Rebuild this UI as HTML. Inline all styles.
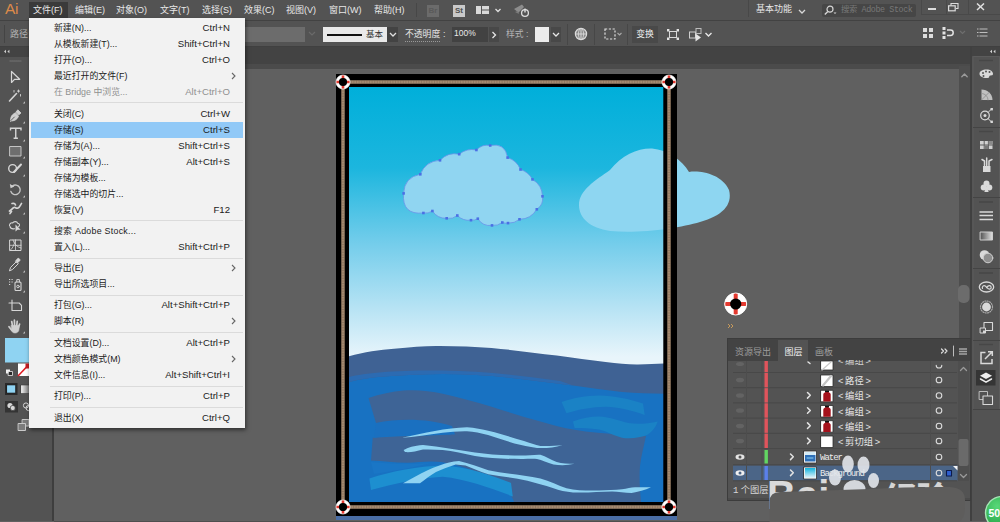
<!DOCTYPE html>
<html lang="zh-CN">
<head>
<meta charset="utf-8">
<title>Adobe Illustrator</title>
<style>
*{margin:0;padding:0;box-sizing:border-box}
html,body{width:1000px;height:522px;overflow:hidden;background:#606060}
body{position:relative;font-family:"Liberation Sans","Noto Sans CJK SC",sans-serif;font-size:9.5px;color:#e6e6e6;line-height:1}
.abs{position:absolute}
#menubar{left:0;top:0;width:1000px;height:20px;background:#535353}
#menubar .mi{position:absolute;top:0;height:20px;line-height:20px;font-size:9px;color:#e8e8e8;white-space:nowrap}
#ctrl{left:0;top:20px;width:1000px;height:27px;background:#535353;border-top:1px solid #424242;border-bottom:1px solid #404040}
#tabstrip{left:0;top:47px;width:972px;height:22px;background:#434343;border-bottom:5px solid #4b4b4b}
#toolbar{left:0;top:47px;width:54px;height:474px;background:#535353;border-right:2px solid #3e3e3e}
#toolhead{left:0;top:47px;width:52px;height:9.500px;background:#434343}
#rpanel{left:970px;top:47px;width:30px;height:474px;background:#535353;border-left:2px solid #404040}
#rhead{left:972px;top:47px;width:28px;height:9px;background:#434343}
#vscroll{left:959px;top:66px;width:11px;height:274px;background:#4e4e4e}
#menu{left:29px;top:18px;width:216px;height:410px;background:#f2f2f2;box-shadow:1px 2px 4px rgba(0,0,0,.5);color:#1b1b1b;font-size:8.9px}
#menu .r{position:absolute;left:2px;width:212px;height:16px;line-height:16px;white-space:nowrap}
#menu .r .l{position:absolute;left:23px;top:0}
#menu .r .s{position:absolute;right:13px;top:0;font-size:9.6px}
#menu .r .a{position:absolute;right:7px;top:4px}
#menu .r.dis{color:#909090}
#menu .r.hl{background:#91c9f7}
#menu .sep{position:absolute;left:21px;width:193px;height:1px;background:#dbdbdb}
.lt{font-size:9.3px;line-height:12px;color:#e6e6e6;white-space:nowrap;word-spacing:-.9px}
.mono{font-family:"Liberation Mono","Noto Sans CJK SC",monospace;font-size:9px;letter-spacing:-1px;color:#ececec}
</style>
</head>
<body>
<!-- ART -->
<svg class="abs" style="left:0;top:0" width="1000" height="522" viewBox="0 0 1000 522">
<defs>
<linearGradient id="sky" gradientUnits="userSpaceOnUse" x1="0" y1="87" x2="0" y2="357">
<stop offset="0" stop-color="#00afda"/><stop offset=".3" stop-color="#1cb6de"/><stop offset=".58" stop-color="#74cdeb"/><stop offset=".82" stop-color="#b7e3f4"/><stop offset="1" stop-color="#e8f5fb"/>
</linearGradient>
<g id="buoy"><circle r="7" fill="#fff"/><path d="M-1.300,-7h2.600v14h-2.600zM-7,-1.300h14v2.600h-14z" fill="#e43a30"/><circle r="7" fill="none" stroke="#fff" stroke-width=".7"/><circle r="4.100" fill="#000"/></g>
</defs>
<rect x="0" y="66" width="1000" height="456" fill="#606060"/>
<!-- blue bleed under frame -->
<rect x="336" y="514" width="341" height="6" fill="#4a6ea6"/>
<rect x="54" y="521" width="903" height="1" fill="#4e4e4e"/>
<!-- sky -->
<rect x="349" y="87" width="315" height="290" fill="url(#sky)"/>
<!-- cloud 2 (behind frame) -->
<path d="M579,205 C579,190 596,180 610,170 C622,155 638,148 652,148.500 C668,150 682,160 689,172 C700,170 722,174 729,190 C733,205 722,216 700,222 C680,228 640,234 610,231 C590,228 579,218 579,205Z" fill="#8ed6f1"/>
<!-- sea -->
<path d="M349,356.300C364,352 380,350 394,348.800C410,347 424,346 436,345.900C456,345.800 474,346.500 491.600,348C514,350 536,353 556.700,355.600C574,358 590,360.500 605.600,362C618,363.500 628,364.500 638,364.400C648,364.300 656,364 664,363.500V502H349Z" fill="#3f6294"/>
<path d="M349,382C360,379 372,377.500 384,376.500C404,375 424,374 442.700,374C466,374 488,375.500 508,377.500C530,380 552,383 573,385.600C590,388 606,390.500 622,392C636,393.300 650,393.700 664,393.700V502H349Z" fill="#1872c2"/>
<path d="M349,377C366,372.500 400,370 442,370.500C480,371 520,375 560,381L573,385.600C552,383 530,380 508,377.500C488,375.500 466,374 442.700,374C424,374 404,375 384,376.500C372,377.500 360,379 349,382Z" fill="#2c6bb2"/>
<!-- big slate band A + right/bottom slate -->
<path d="M368.500,398C380,394 392,391.500 403.600,390.500C417,389.500 430,391 442.700,393.700C460,397.500 476,402 491.600,406.800C508,412 524,417 540.400,421.400C551,424.500 562,427.500 573,429.600C590,432.500 606,433.800 622,434.500C632,435 640,435.500 646,436C644,446 641,456 640,466C639,478 640,490 641,502H514C512,494 505,487 497,482C480,472 465,467 452,464C440,461 430,461 420,462C402,464 386,461 371,460.500L372.700,437.700C398,436 420,436 452,434.500C430,428 404,421 376,423Z" fill="#3e6496"/>
<path d="M376,423C400,418 428,418.500 452,426L455,434.500C426,434 398,434.500 374,437.700Z" fill="#1a70c0"/>
<!-- teal strokes -->
<path d="M561.600,402C574,397.500 586,395.600 599,395.400C614,395.600 630,399 643,403.500L644.700,415C632,410.500 618,407.200 605.600,406.800C592,407 578,409.500 566.500,413.300Z" fill="#1a82c5"/>
<path d="M573,421.400C582,418 590,416.600 599,416.500C610,417 620,421 628.400,423C638,424.500 648,423.500 657.700,421.400C656,427 652,431.500 648,434.500C640,438 630,439 622,437.700C614,436 606,431 599,429.600C590,428 582,428 574.600,428Z" fill="#1a82c5"/>
<path d="M369.400,478.400C392,471 418,466 442.700,465.400C468,467 492,475 511,483L512.800,496.400C490,488 466,479 442.700,476.800C418,478 394,484 371,490Z" fill="#1d8fd0"/>
<path d="M371,462C392,464 410,464.500 430,463C420,466 400,470 374,474Z" fill="#1a76c6"/>
<!-- streaks -->
<path d="M402,437.700C424,433 446,428 467,427.300C488,429 506,436 524,441C530,443 535,445 540.400,445.900C548,446.500 556,445.500 562.600,444.900C554,447.500 546,448.500 537,448C529,447 522,445.500 514.400,443.600C498,438 482,432 467,431.200C458,431 450,432 442.700,432.800C428,435 414,437 402,437.700Z" fill="#8fd3f2"/>
<path d="M403.600,450C408,447.500 414,445.500 423,444.900C440,446.500 458,450 475,452.400C490,454.500 506,455.500 521,455.600C528,455.500 534,454.500 540.400,454.700C546,456.500 551,460 556.700,462C562,463.500 568,463.800 574.600,463.800C567,465.500 560,465.500 553.500,464.400C547,463 542,460 537,459C532,458.500 526,459.200 521,459C505,459 490,458.500 475,456C464,453.500 453,451 442.700,450C436,449.500 429,449.300 423,449.500C416,451.500 410,452.500 405,452Z" fill="#8fd3f2"/>
<path d="M403,483.300C407,481 411,479 415,476.800C423,472 431,468 439.500,465.400C446,463 452,461.500 459,461C469,463.500 479,467 488.300,470.300C506,474 524,475 540.400,478.400C550,481 558,485.500 566.500,488.200C577,490.500 588,490.800 599,490.500C607,490.300 615,490 622,489.200C627,488.500 631,487.500 635,487.200L651,487.200C645,490 638,492 631.600,493C625,492.800 618,491.600 612,491.500C599,491.800 586,493 573,492.400C566,491.500 559,490.500 553.500,488.200C544,485 536,483 527.400,480.700C514,477.500 501,476.500 488.300,474.200C480,472 473,468 465.500,465.400L455.700,464.400C449,466.500 442,469 436,472C430,475.500 425,479.500 420,483.300Z" fill="#8fd3f2"/>
<!-- cloud 1 -->
<path id="c1" d="M403.6,193.4Q404.3,177.2 420.3,174.3Q425.7,161.0 440.0,160.3Q447.9,151.9 459.2,154.2Q466.8,148.0 476.4,150.0Q482.0,143.9 490.2,145.5Q505.2,142.5 507.6,157.6Q516.9,160.5 520.5,169.5Q528.5,172.0 532.5,179.4Q542.2,185.1 542.5,196.3Q543.8,204.6 536.8,209.3Q530.9,219.1 519.5,219.3Q514.5,223.5 508.0,223.1Q505.1,223.5 502.3,222.5Q497.7,226.0 492.0,225.4Q482.8,226.6 477.8,218.7Q474.6,220.5 471.0,220.2Q463.0,221.1 457.3,215.5Q452.7,219.4 446.7,218.3Q437.5,218.7 432.4,211.0Q428.3,213.8 423.4,213.0Q401.7,215.1 403.6,193.4Z" fill="#90d5f1" stroke="#6a93ea" stroke-width=".8"/>
<g fill="#4a70e4"><rect x="402.3" y="192.1" width="2.6" height="2.6"/><rect x="419.0" y="173.0" width="2.6" height="2.6"/><rect x="438.7" y="159.0" width="2.6" height="2.6"/><rect x="457.9" y="152.9" width="2.6" height="2.6"/><rect x="475.1" y="148.7" width="2.6" height="2.6"/><rect x="488.9" y="144.2" width="2.6" height="2.6"/><rect x="506.3" y="156.3" width="2.6" height="2.6"/><rect x="519.2" y="168.2" width="2.6" height="2.6"/><rect x="531.2" y="178.1" width="2.6" height="2.6"/><rect x="541.2" y="195.0" width="2.6" height="2.6"/><rect x="535.5" y="208.0" width="2.6" height="2.6"/><rect x="518.2" y="218.0" width="2.6" height="2.6"/><rect x="506.7" y="221.8" width="2.6" height="2.6"/><rect x="501.0" y="221.2" width="2.6" height="2.6"/><rect x="490.7" y="224.1" width="2.6" height="2.6"/><rect x="476.5" y="217.4" width="2.6" height="2.6"/><rect x="469.7" y="218.9" width="2.6" height="2.6"/><rect x="456.0" y="214.2" width="2.6" height="2.6"/><rect x="445.4" y="217.0" width="2.6" height="2.6"/><rect x="431.1" y="209.7" width="2.6" height="2.6"/><rect x="422.1" y="211.7" width="2.6" height="2.6"/></g>
<!-- frame -->
<path d="M336,74H677V516H336Z M349,87V502H663.300V87Z" fill="#000" fill-rule="evenodd"/>
<path d="M343,82H669V507H343Z" fill="none" stroke="#a58a70" stroke-width="3.4"/>
<path d="M343,82H669V507H343Z" fill="none" stroke="#6e5a48" stroke-width="3.4" stroke-dasharray="1 1.6" opacity=".35"/>
<use href="#buoy" x="343" y="82"/><use href="#buoy" x="669" y="82"/><use href="#buoy" x="343" y="507"/><use href="#buoy" x="669" y="507"/>
<!-- cloud 2 outside -->
<path d="M677,150 V233 C700,228 722,216 729,205 C733,195 722,172 700,167 C690,166 684,160 677,150Z" fill="#8ed6f1" opacity="0"/>
<g transform="translate(735.700,304)"><circle r="11" fill="#fff"/><path d="M-2,-11h4v22h-4zM-11,-2h22v4h-22z" fill="#e43a30"/><circle r="11" fill="none" stroke="#fff" stroke-width="1"/><circle r="5.600" fill="#000"/></g>
<path d="M728,324l2,2l-2,2m3,-4l2,2l-2,2" stroke="#c79a5b" stroke-width="1" fill="none"/>
</svg>

<div id="tabstrip" class="abs"></div>
<div id="vscroll" class="abs"></div>
<div id="menubar" class="abs">
 <div class="mi" style="left:5px;font-size:15.5px;color:#dc8a4a;letter-spacing:-.3px;top:-1px">Ai</div>
 <div class="abs" style="left:29px;top:2px;width:39px;height:16px;background:#3a3a3a"></div>
 <div class="mi" style="left:33px">文件(F)</div>
 <div class="mi" style="left:75px">编辑(E)</div>
 <div class="mi" style="left:116px">对象(O)</div>
 <div class="mi" style="left:160px">文字(T)</div>
 <div class="mi" style="left:202px">选择(S)</div>
 <div class="mi" style="left:244px">效果(C)</div>
 <div class="mi" style="left:286px">视图(V)</div>
 <div class="mi" style="left:329px">窗口(W)</div>
 <div class="mi" style="left:374px">帮助(H)</div>
 <div class="abs" style="left:416px;top:3px;width:1px;height:14px;background:#474747"></div>
 <div class="abs" style="left:427px;top:5px;width:12px;height:12px;background:#6b6b6b;color:#5a5a5a;font-size:8px;line-height:12px;text-align:center;font-weight:bold">Br</div>
 <div class="abs" style="left:453px;top:5px;width:12px;height:12px;background:#c9c9c9;color:#505050;font-size:8px;line-height:12px;text-align:center;font-weight:bold">St</div>
 <svg class="abs" style="left:476px;top:6px" width="26" height="10" viewBox="0 0 26 10"><path d="M0,0h5v8h-5zM6,0h7v3.5h-7zM6,4.5h7v3.5h-7z" fill="#d9d9d9"/><path d="M19.5,3l2.5,2.5l2.5,-2.5" stroke="#e0e0e0" stroke-width="1.3" fill="none"/></svg>
 <svg class="abs" style="left:513px;top:3px" width="18" height="15" viewBox="0 0 18 15"><path d="M1,6l8,-4.5l2,2.5l-6,6l-1.5,-2z" fill="#8d8d8d"/><path d="M2,9l3,-1l1,3z" fill="#7d7d7d"/><circle cx="12" cy="10" r="3.4" fill="none" stroke="#dedede" stroke-width="1.3"/><path d="M12,5.5v4" stroke="#dedede" stroke-width="1.4"/></svg>
 <div class="abs" style="left:748px;top:0;width:1px;height:17px;background:#484848"></div>
 <div class="mi" style="left:756px;top:-1px;color:#e6e6e6">基本功能</div>
 <svg class="abs" style="left:798px;top:9px" width="8" height="6"><path d="M1,1l3,3l3,-3" stroke="#d8d8d8" stroke-width="1.3" fill="none"/></svg>
 <div class="abs" style="left:822px;top:4px;width:94px;height:13px;background:#464646;border-radius:2px"></div>
 <svg class="abs" style="left:824px;top:5px" width="14" height="11" viewBox="0 0 14 11"><circle cx="6" cy="4.2" r="3" fill="none" stroke="#d5d5d5" stroke-width="1.2"/><path d="M3.8,6.4l-3,3" stroke="#d5d5d5" stroke-width="1.4"/><path d="M9.5,7.5h3l-1.5,1.6z" fill="#d5d5d5"/></svg>
 <div class="abs" style="left:841px;top:4px;font-family:'Liberation Mono','Noto Sans CJK SC',monospace;font-size:8.4px;line-height:13px;color:#787878;letter-spacing:-.4px;white-space:nowrap">搜索 Adobe Stock</div>
 <div class="abs" style="left:921px;top:0;width:79px;height:15px;border-left:1px solid #494949;border-bottom:1px solid #494949"></div>
 <div class="abs" style="left:946px;top:0;width:1px;height:15px;background:#494949"></div>
 <div class="abs" style="left:968px;top:0;width:1px;height:15px;background:#494949"></div>
 <div class="abs" style="left:928px;top:8px;width:8px;height:2px;background:#dcdcdc"></div>
 <svg class="abs" style="left:948px;top:3px" width="11" height="9" viewBox="0 0 11 9"><path d="M3,2.5v-2h7v5h-2" fill="none" stroke="#dcdcdc" stroke-width="1.1"/><rect x=".6" y="2.8" width="6.6" height="5" fill="none" stroke="#dcdcdc" stroke-width="1.2"/></svg>
 <svg class="abs" style="left:976px;top:3px" width="9" height="8" viewBox="0 0 9 8"><path d="M1,.5l7,6.5M8,.5l-7,6.5" stroke="#e0e0e0" stroke-width="1.5"/></svg>
</div>
<div id="ctrl" class="abs">
 <div class="abs" style="left:4px;top:4px;width:1px;height:18px;background:#444"></div>
 <div class="abs" style="left:10px;top:6px;font-size:9px;color:#b0b0b0;line-height:14px">路径</div>
 <div class="abs" style="left:245px;top:6px;width:60px;height:15px;background:#6c6c6c"></div>
 <svg class="abs" style="left:308px;top:10px" width="8" height="6"><path d="M1,1l3,3l3,-3" stroke="#6a6a6a" stroke-width="1.2" fill="none"/></svg>
 <div class="abs" style="left:323px;top:6px;width:64px;height:15px;background:#e9e9e9"></div>
 <div class="abs" style="left:327px;top:13px;width:35px;height:2px;background:#111"></div>
 <div class="abs" style="left:366px;top:6px;font-size:8.5px;color:#333;line-height:15px">基本</div>
 <div class="abs" style="left:387px;top:6px;width:11px;height:15px;background:#434343"></div>
 <svg class="abs" style="left:389px;top:11px" width="8" height="6"><path d="M1,1l3,3l3,-3" stroke="#e0e0e0" stroke-width="1.3" fill="none"/></svg>
 <div class="abs" style="left:405px;top:6px;font-size:8.8px;color:#e4e4e4;line-height:15px;border-bottom:1px dotted #999;height:15px">不透明度</div>
 <div class="abs" style="left:443px;top:6px;font-size:9px;color:#e4e4e4;line-height:15px">:</div>
 <div class="abs" style="left:452px;top:6px;width:36px;height:15px;background:#424242;font-size:8.5px;color:#e8e8e8;line-height:13px;padding-left:2px">100%</div>
 <div class="abs" style="left:489px;top:6px;width:10px;height:15px;background:#484848"></div>
 <svg class="abs" style="left:491px;top:10px" width="6" height="8"><path d="M1.5,1l3,3l-3,3" stroke="#e6e6e6" stroke-width="1.3" fill="none"/></svg>
 <div class="abs" style="left:506px;top:6px;font-size:8.8px;color:#b5b5b5;line-height:15px">样式 :</div>
 <div class="abs" style="left:535px;top:6px;width:14px;height:15px;background:#ececec"></div>
 <div class="abs" style="left:551px;top:6px;width:10px;height:15px;background:#484848"></div>
 <svg class="abs" style="left:552px;top:11px" width="8" height="6"><path d="M1,1l3,3l3,-3" stroke="#e6e6e6" stroke-width="1.3" fill="none"/></svg>
 <div class="abs" style="left:567px;top:3px;width:1px;height:21px;background:#474747"></div>
 <svg class="abs" style="left:574px;top:6px" width="14" height="14" viewBox="0 0 14 14"><circle cx="7" cy="7" r="5.6" fill="#8a8a8a" stroke="#dcdcdc" stroke-width="1.2"/><path d="M7,1.4v11.2M1.4,7h11.2" stroke="#dcdcdc" stroke-width=".9"/><ellipse cx="7" cy="7" rx="2.6" ry="5.6" fill="none" stroke="#dcdcdc" stroke-width=".8"/></svg>
 <div class="abs" style="left:594px;top:3px;width:1px;height:21px;background:#474747"></div>
 <svg class="abs" style="left:604px;top:7px" width="20" height="13" viewBox="0 0 20 13"><rect x="1" y="1" width="10" height="10" fill="none" stroke="#dedede" stroke-width="1.2" stroke-dasharray="2.2 1.6"/><path d="M13.5,5l2,2l2,-2" stroke="#aaa" stroke-width="1.1" fill="none"/></svg>
 <div class="abs" style="left:627px;top:3px;width:1px;height:21px;background:#474747"></div>
 <div class="abs" style="left:632px;top:5px;width:26px;height:17px;background:#494949;font-size:8.8px;color:#ededed;line-height:17px;text-align:center">变换</div>
 <svg class="abs" style="left:666px;top:7px" width="14" height="13" viewBox="0 0 14 13"><rect x="3.5" y="3.5" width="7" height="6" fill="none" stroke="#d8d8d8" stroke-width="1"/><path d="M1,1h2.4v2.4h-2.4zM10.6,1h2.4v2.4h-2.4zM1,9.6h2.4v2.4h-2.4zM10.6,9.6h2.4v2.4h-2.4z" fill="#e2e2e2"/></svg>
 <svg class="abs" style="left:688px;top:6px" width="26" height="15" viewBox="0 0 26 15"><rect x="1.5" y="5" width="6" height="6" fill="none" stroke="#cfcfcf" stroke-width="1"/><rect x="8" y="1.5" width="5" height="5" fill="none" stroke="#bdbdbd" stroke-width="1"/><path d="M7.5,6.5v8l5.5,-4z" fill="#e4e4e4"/><path d="M17.5,6l3,3l3,-3" stroke="#e6e6e6" stroke-width="1.4" fill="none"/></svg>
 <svg class="abs" style="left:922px;top:6px" width="12" height="12" viewBox="0 0 12 12"><path d="M1,1h4v4h-4zM7,1h4v4h-4zM1,7h4v4h-4zM7,7h4v4h-4z" fill="#dcdcdc"/></svg>
 <svg class="abs" style="left:941px;top:5px" width="28" height="14" viewBox="0 0 28 14"><path d="M1.5,1h3v3h-3zM1.5,5.5h3v3h-3zM1.5,10h3v3h-3z" fill="#e2e2e2"/><path d="M6,4h3.5a2.6,2.6 0 0 1 0,5.4h-3.5" fill="none" stroke="#e2e2e2" stroke-width="1.5"/><path d="M19,5l2.5,2.5l2.5,-2.5" stroke="#6e6e6e" stroke-width="1.2" fill="none"/></svg>
 <svg class="abs" style="left:977px;top:6px" width="11" height="11" viewBox="0 0 11 11"><path d="M0,2h1.5M0,5.5h1.5M0,9h1.5" stroke="#bdbdbd" stroke-width="1.2"/><path d="M2.5,2h8M2.5,5.5h8M2.5,9h8" stroke="#bdbdbd" stroke-width="1.2"/></svg>
</div>
<div id="toolbar" class="abs"></div>
<div id="toolhead" class="abs"></div>
<svg class="abs" style="left:0;top:0" width="54" height="522" viewBox="0 0 54 522" fill="none" stroke="#d6d6d6" stroke-width="1.2" stroke-linejoin="round" stroke-linecap="round">
 <path d="M4,51.5l2,-1.8v3.6zM7.4,51.5l2,-1.8v3.6z" fill="#cfcfcf" stroke="none"/>
 <path d="M10,61h12" stroke="#6a6a6a" stroke-width="1.4" stroke-dasharray="1 1"/>
 <!-- selection -->
 <path d="M11.5,71.5v11l3,-3.2h5.2z"/>
 <!-- wand -->
 <path d="M9.5,101l7,-7.5" stroke-width="1.6"/><path d="M18.5,90v2.2M17.4,91.1h2.2M20.5,94.5v1.6M14,90.5v1.6" stroke-width=".9"/>
 <!-- pen -->
 <path d="M10.5,121c0,-4 1,-6 4.5,-8l3.5,3.5c-2,3.5 -4,4.5 -8,4.5zM15.8,112.2l2,-2.4l3.2,3.2l-2.4,2z" fill="#cfcfcf" stroke-width=".8"/><path d="M10.8,120.6l3.6,-3.6" stroke="#535353" stroke-width=".9"/>
 <!-- T -->
 <path d="M10.5,130.5v-2.2h10.5v2.2M15.75,128.5v9.5M13.6,138.2h4.3" stroke-width="1.4" stroke-linecap="butt" stroke-linejoin="miter"/>
 <!-- rect -->
 <rect x="10" y="146.500" width="11" height="9.500" fill="#6e6e6e" stroke-width="1" stroke="#c4c4c4"/>
 <!-- blob brush -->
 <circle cx="12.600" cy="168.500" r="3.900" stroke-width="1.400"/><path d="M14,172l7,-7.500" stroke-width="2"/>
 <!-- rotate -->
 <g transform="translate(0,2)"><path d="M12.500,184a4.800,4.800 0 1 1 -1.600,5.500" stroke="#c4c4c4" stroke-width="1.400"/><path d="M9.800,182l.8,4.200l3.800,-1.600z" fill="#d0d0d0" stroke="none"/></g>
 <!-- width/warp -->
 <path d="M9.500,211c2,-1 3,-3 4.500,-3.500s2,1.500 4,.5s2.500,-3.500 3.500,-4.500M12,203.500c1.500,-.5 3,0 3.500,1.500M10,213.500l1.500,-2" stroke-width="1.700"/>
 <!-- shape builder -->
 <path d="M9.500,225.500c0,-2.200 1.800,-3 3.200,-2.600c1,-1.800 4.300,-1.800 5,.4c2,0 2.500,2.600 .8,3.400M10,226.500c.5,2 2.500,2.600 4.500,2.200" stroke-width="1.100"/><path d="M15.500,224.500v7l2,-1.800l3.200,0z" fill="#d6d6d6" stroke="none"/>
 <!-- mesh -->
 <rect x="10" y="240" width="11" height="10.500" stroke-width="1"/><path d="M10,245.300h11M15.500,240v10.500M10,250.500c3,-2 4,-6 5.500,-10.500M13,240c1,4 4,7 8,8" stroke-width=".8"/>
 <!-- eyedropper -->
 <path d="M9.500,270.500l1.200,-3.200l5.600,-5.600l2,2l-5.600,5.600z" stroke-width="1"/><path d="M15.600,261l2,-2.400c1,-1 3.200,1.200 2.200,2.200l-2.400,2z" fill="#d6d6d6" stroke-width=".8"/>
 <!-- symbol sprayer -->
 <g transform="translate(0,1.500)"><rect x="15" y="280.500" width="6" height="8.500" rx="1" stroke-width="1.100"/><path d="M16.800,280.500v-2.400h2.600v2.400" stroke-width="1"/><circle cx="18" cy="285" r="1.300" stroke-width=".9"/><path d="M9,278h1.200M11.500,278h1.200M9,280.500h1.200M9,283h1.200M11.500,280.500h1.200" stroke-width="1.200" stroke-linecap="butt"/></g>
 <!-- artboard -->
 <g transform="translate(0,3.500)"><path d="M12,296.500v10.500h9.500M9,299.500h10.200l2.300,2.300v5.200" stroke-width="1.100"/></g>
 <!-- hand -->
 <g transform="translate(0,4)" stroke="#cfcfcf"><path d="M12.600,322.500l-.9,-5M14.600,322l-.2,-5.800M16.600,322.500l.6,-5.200M18.400,324l1.200,-4M11.500,326l-2.500,-3.300" stroke-width="1.700"/><path d="M11.300,321.500h7.700v3.500c0,2.800 -2,4 -4,4c-2,0 -3.300,-1.300 -3.700,-2.800z" fill="#cfcfcf" stroke-width=".6"/></g>
 <!-- sub-tool corner marks -->
 <path d="M25,103.500v-2.200l-2.200,2.200zM25,123.500v-2.200l-2.200,2.200zM25,141.500v-2.200l-2.200,2.200zM25,158.500v-2.200l-2.200,2.200zM25,176.500v-2.200l-2.200,2.200zM25,197.500v-2.200l-2.200,2.200zM25,214.500v-2.200l-2.200,2.200zM25,233.500v-2.200l-2.200,2.200zM25,272.500v-2.200l-2.200,2.200zM25,292.500v-2.200l-2.200,2.200zM25,333.500v-2.200l-2.200,2.200z" fill="#bdbdbd" stroke="none"/>
 <!-- fill swatch -->
 <rect x="5" y="338" width="47" height="24.500" fill="#8fd3f2" stroke="none"/>
 <rect x="6" y="369.500" width="4" height="4" fill="#f2f2f2" stroke="none"/><rect x="8.500" y="371.500" width="4" height="4" fill="#2a2a2a" stroke="#e8e8e8" stroke-width=".8"/>
 <rect x="18" y="363.500" width="13" height="12.500" fill="#fff" stroke="none"/><path d="M18,376l9,-9.500" stroke="#e01b22" stroke-width="1.600" stroke-linecap="butt"/><rect x="25.500" y="363.500" width="4" height="5" fill="#c41e24" stroke="none"/>
 <rect x="5" y="383" width="12.500" height="12" fill="#2a2a2a" stroke="none"/><rect x="7" y="385" width="8.500" height="8" fill="#8fd3f2" stroke="#1d1d1d" stroke-width=".6"/>
 <defs><linearGradient id="tg"><stop offset="0" stop-color="#f4f4f4"/><stop offset="1" stop-color="#6a6a6a"/></linearGradient></defs>
 <rect x="21" y="385" width="9" height="8.500" fill="url(#tg)" stroke="#3a3a3a" stroke-width=".6"/>
 <rect x="5" y="401" width="13" height="11.500" fill="#343434" stroke="none"/><circle cx="10" cy="405.500" r="2.600" fill="#d8d8d8" stroke="none"/><circle cx="12.800" cy="408" r="2.600" fill="#d8d8d8" stroke="#343434" stroke-width=".7"/>
 <circle cx="26" cy="405.500" r="2.600" stroke-width="1"/><circle cx="28.600" cy="408" r="2.600" stroke-width="1"/>
 <rect x="22.500" y="419.500" width="6.500" height="6.500" fill="#7c7c7c" stroke="#c9c9c9" stroke-width="1"/><rect x="18.500" y="423.500" width="7" height="7" fill="#7c7c7c" stroke="#c9c9c9" stroke-width="1"/>
</svg>
<div id="rpanel" class="abs"></div>
<div id="rhead" class="abs"></div>
<svg class="abs" style="left:957px;top:0" width="43" height="522" viewBox="957 0 43 522" fill="none" stroke="#d9d9d9" stroke-width="1.200" stroke-linejoin="round" stroke-linecap="round">
 <path d="M990,51.500l2,-1.800v3.600zM993.400,51.500l2,-1.800v3.600z" fill="#d5d5d5" stroke="none"/>
 <rect x="973.500" y="56.500" width="26" height="353" stroke="#5c5c5c" stroke-width="1"/>
 <g stroke="#474747" stroke-width="1.400" stroke-linecap="butt"><path d="M979,60.500h14M979,131.500h14M979,202h14M979,273h14M979,344.500h14"/></g>
 <g stroke="#444" stroke-width="1" stroke-linecap="butt"><path d="M973,127.500h27M973,197.500h27M973,268.500h27M973,340.500h27M973,409.500h27"/></g>
 <!-- scroll arrow -->
 <path d="M961.800,76.800l2.700,-2.700l2.700,2.700" stroke="#9a9a9a" stroke-width="1.400"/>
 <rect x="958" y="285" width="11.500" height="18" rx="5" fill="#6c6c6c" stroke="none"/>
 <!-- palette -->
 <path d="M986.500,69.500c4,0 6.500,2 6.500,4.300c0,2.500 -2.500,1 -3.500,2.200c-.8,1 .5,2 -3,2c-4,0 -7,-1.500 -7,-4.200c0,-2.600 3,-4.300 7,-4.300z" fill="#d9d9d9" stroke="none"/><circle cx="983" cy="73" r="1" fill="#535353" stroke="none"/><circle cx="986" cy="71.500" r="1" fill="#535353" stroke="none"/><circle cx="989.500" cy="72" r="1" fill="#535353" stroke="none"/><circle cx="983.500" cy="76" r="1" fill="#535353" stroke="none"/>
 <!-- color guide -->
 <path d="M981.500,89.500v10.500h11c0,-6 -5,-10.500 -11,-10.500z" fill="#bfbfbf" stroke="none"/><path d="M981.500,93.500c3.500,0 6.500,3 6.500,6.500M981.500,100l7.500,-7.500" stroke="#8a8a8a" stroke-width=".8"/>
 <!-- graph -->
 <circle cx="985" cy="115.500" r="4.300" stroke-width="1.200"/><circle cx="985" cy="115.500" r="1.500" fill="#d9d9d9" stroke="none"/><path d="M988,112.500l3.500,-3.500M988,118.500l3.500,3.500" stroke-width="1"/><rect x="990.500" y="108" width="2.400" height="2.400" fill="#d9d9d9" stroke="none"/><rect x="990.500" y="120.600" width="2.400" height="2.400" fill="#d9d9d9" stroke="none"/>
 <!-- swatches -->
 <rect x="980" y="141" width="12.500" height="8" fill="#cfcfcf" stroke="none"/><path d="M980,145h12.500M984.200,141v8M988.400,141v8" stroke="#535353" stroke-width=".9"/><rect x="984.600" y="145.500" width="3.400" height="3.500" fill="#777" stroke="none"/><rect x="988.800" y="141" width="3.700" height="3.600" fill="#8a8a8a" stroke="none"/>
 <!-- brushes -->
 <path d="M983,166h7.500v6h-7.500z" fill="#d9d9d9" stroke="none"/><path d="M984.500,165.500v-4.500M986.700,165.500v-7.500M989,165.500v-4.500M984.500,161l-2.500,-1.500M989,161l3,-1.500" stroke-width="1.500"/>
 <!-- club -->
 <circle cx="986.500" cy="183.500" r="3" fill="#d9d9d9" stroke="none"/><circle cx="983.700" cy="187.500" r="3" fill="#d9d9d9" stroke="none"/><circle cx="989.300" cy="187.500" r="3" fill="#d9d9d9" stroke="none"/><path d="M986.500,186l-2.200,6h4.400z" fill="#d9d9d9" stroke="none"/>
 <!-- stroke -->
 <path d="M979.500,212h13.500M979.500,215.500h13.500M979.500,219.500h13.500" stroke-width="1.700" stroke-linecap="butt"/>
 <!-- gradient -->
 <defs><linearGradient id="rg"><stop offset="0" stop-color="#555"/><stop offset="1" stop-color="#e2e2e2"/></linearGradient></defs>
 <rect x="980.500" y="232" width="12" height="8" fill="url(#rg)" stroke="#cfcfcf" stroke-width="1"/>
 <!-- transparency -->
 <circle cx="984.500" cy="255" r="4.800" fill="#d9d9d9" stroke="none"/><circle cx="988" cy="258" r="4.800" fill="#8e8e8e" stroke="#cfcfcf" stroke-width="1"/>
 <!-- CC -->
 <ellipse cx="986.500" cy="287" rx="7.200" ry="5" stroke-width="1.300"/><path d="M982.500,288.500c-.8,-2 1,-3.600 2.800,-2.600c1.500,1 2.500,3.500 4.500,3.200c1.800,-.4 1.800,-3 0,-3.400c-1.500,-.2 -2.600,1 -3.300,2" stroke-width="1.200"/>
 <!-- sun -->
 <circle cx="986.500" cy="307" r="4.400" fill="#d9d9d9" stroke="none"/><circle cx="986.500" cy="307" r="6" stroke="#a8a8a8" stroke-width="1.200" stroke-dasharray="1 1.360"/>
 <!-- pathfinder -->
 <rect x="984" y="322.500" width="8.500" height="8" stroke-width="1.100"/><rect x="980.500" y="328" width="5" height="5" fill="#535353" stroke-width="1"/><rect x="983" y="330.500" width="2.500" height="2.500" fill="#d9d9d9" stroke="none"/>
 <!-- export -->
 <path d="M985.500,352.500h-4.500v11h11v-4.500" stroke-width="1.500" stroke-linejoin="miter" stroke-linecap="butt"/><path d="M985,359l7,-7M988,351.800h4.300v4.300" stroke-width="1.500" stroke-linejoin="miter" stroke-linecap="butt"/>
 <!-- layers -->
 <rect x="976" y="370" width="19.500" height="15.500" fill="#353535" stroke="none"/><path d="M986,372.500l6,3.300l-6,3.300l-6,-3.300z" fill="#ededed" stroke="none"/><path d="M980.500,379l5.500,3.200l5.500,-3.200" stroke="#ededed" stroke-width="1.500"/>
 <!-- artboards -->
 <rect x="979.500" y="391.500" width="8" height="8" stroke="#bcbcbc" stroke-width="1"/><rect x="983" y="396" width="9.500" height="8.500" fill="#535353" stroke-width="1.100"/>
</svg>

<!-- LAYERS PANEL -->
<div class="abs" style="left:727px;top:338px;width:244px;height:163px;background:#4b4b4b;border:1px solid #3c3c3c"></div>
<div class="abs" style="left:728px;top:339px;width:242px;height:22px;background:#434343"></div>
<div class="abs" style="left:778px;top:340px;width:30px;height:22px;background:#535353"></div>
<div class="abs" style="left:728px;top:361px;width:242px;height:137px;background:#535353"></div>
<div class="abs lt" style="left:735px;top:345.500px;color:#9d9d9d;font-size:9px">资源导出</div>
<div class="abs lt" style="left:784.500px;top:345.500px;color:#f2f2f2;font-size:9px">图层</div>
<div class="abs lt" style="left:815px;top:345.500px;color:#9d9d9d;font-size:9px">画板</div>
<svg class="abs" style="left:727px;top:338px" width="244" height="163" viewBox="727 338 244 163" fill="none" stroke-linecap="round" stroke-linejoin="round">
 <path d="M941.500,349l2,2l-2,2M945,349l2,2l-2,2" stroke="#dedede" stroke-width="1.200"/>
 <path d="M953.500,346v10" stroke="#bdbdbd" stroke-width="1"/>
 <path d="M959,349h8M959,351.500h8M959,354h8" stroke="#a6a6a6" stroke-width="1.500" stroke-linecap="butt"/>
 <!-- selected row -->
 <rect x="733" y="465.500" width="224.500" height="15" fill="#4b6587"/>
 <!-- row lines -->
 <g stroke="#484848" stroke-width="1" stroke-linecap="butt"><path d="M733,372.500h224M733,387.700h224M733,402.900h224M733,418.100h224M733,433.300h224M733,448.600h224M733,464.800h224M733,480.800h224"/><path d="M746.500,361v120M762,361v120M930.500,361v120" stroke="#4d4d4d"/></g>
 <!-- color bars -->
 <path d="M766.200,361v87" stroke="#e0545c" stroke-width="3.400" stroke-linecap="butt"/>
 <path d="M766.200,450v13.500" stroke="#62d562" stroke-width="3.400" stroke-linecap="butt"/>
 <path d="M766.200,466v14" stroke="#5b80ea" stroke-width="3.400" stroke-linecap="butt"/>
 <g stroke="#535353" stroke-width=".8"><path d="M764,372.500h5M764,387.700h5M764,402.900h5M764,418.100h5M764,433.300h5"/></g>
 <!-- eyes dim -->
 <g fill="#636363"><ellipse cx="740" cy="364" rx="4" ry="2"/><ellipse cx="740" cy="380" rx="4" ry="2.300"/><ellipse cx="740" cy="395.500" rx="4" ry="2.300"/><ellipse cx="740" cy="410.500" rx="4" ry="2.300"/><ellipse cx="740" cy="426" rx="4" ry="2.300"/><ellipse cx="740" cy="441" rx="4" ry="2.300"/></g>
 <!-- eyes bright -->
 <g><ellipse cx="740" cy="457" rx="4.500" ry="2.800" fill="#e4e4e4"/><circle cx="740" cy="457" r="1.500" fill="#535353"/><ellipse cx="740" cy="473" rx="4.500" ry="2.800" fill="#f0f0f0"/><circle cx="740" cy="473" r="1.500" fill="#4b6587"/></g>
 <!-- chevrons -->
 <g stroke="#e2e2e2" stroke-width="1.500"><path d="M808,362l2,1.500M807.500,392.500l2.800,2.800l-2.800,2.800M807.500,407.700l2.800,2.800l-2.800,2.800M807.500,422.900l2.800,2.800l-2.800,2.800M807.500,438.100l2.800,2.800l-2.800,2.800M790.500,454l2.800,2.800l-2.800,2.800M790.500,470l2.800,2.800l-2.800,2.800"/></g>
 <!-- thumbs -->
 <g stroke="#2f2f2f" stroke-width=".8"><rect x="821" y="361" width="12" height="9" fill="#fff"/><rect x="821" y="375" width="12" height="11.500" fill="#fff"/><rect x="821" y="390.300" width="12" height="11.500" fill="#fff"/><rect x="821" y="405.500" width="12" height="11.500" fill="#fff"/><rect x="821" y="420.700" width="12" height="11.500" fill="#fff"/><rect x="821" y="436" width="12" height="11.500" fill="#fff"/><rect x="804" y="451" width="12.500" height="12" fill="#fff"/><rect x="804" y="467" width="12.500" height="12" fill="#fff"/></g>
 <path d="M822,370l9,-8" stroke="#c9c9c9" stroke-width="1.200"/><path d="M823,385.500l8,-9.500" stroke="#c4c4c4" stroke-width="2.200"/>
 <g fill="#a5121c" stroke="none"><path d="M823.300,401.600v-7c0,-1.500 1.500,-2 2,-2.300v-1.300h3.400v1.300c.5,.3 2,.8 2,2.300v7z"/><path d="M823.300,416.800v-7c0,-1.500 1.500,-2 2,-2.300v-1.300h3.400v1.300c.5,.3 2,.8 2,2.300v7z"/><path d="M823.300,432v-7c0,-1.500 1.500,-2 2,-2.300v-1.300h3.400v1.300c.5,.3 2,.8 2,2.300v7z"/></g>
 <g fill="#111" stroke="none"><rect x="825" y="390.500" width="4" height="1.600"/><rect x="825" y="405.700" width="4" height="1.600"/><rect x="825" y="420.900" width="4" height="1.600"/></g>
 <rect x="805" y="455" width="10.500" height="6.500" fill="#2d6fb8"/><rect x="805" y="452" width="10.500" height="3" fill="#d4ecf7"/><path d="M807,458h6" stroke="#8fd3f2" stroke-width="1"/>
 <defs><linearGradient id="lb" x1="0" y1="0" x2="0" y2="1"><stop offset="0" stop-color="#10b2de"/><stop offset="1" stop-color="#e8f5fb"/></linearGradient></defs>
 <rect x="805" y="468" width="10.500" height="10" fill="url(#lb)"/>
 <!-- target circles -->
 <g stroke="#dcdcdc" stroke-width="1.100"><circle cx="939" cy="380" r="2.800"/><circle cx="939" cy="395.500" r="2.800"/><circle cx="939" cy="410.500" r="2.800"/><circle cx="939" cy="426" r="2.800"/><circle cx="939" cy="441" r="2.800"/><circle cx="939" cy="457" r="2.800"/><circle cx="939" cy="473" r="2.800"/><path d="M936.200,365.200a2.800,2.800 0 0 0 5.600,0"/></g>
 <rect x="946.500" y="470.500" width="5" height="5.500" fill="#2f5fd0" stroke="#0d1b4a" stroke-width="1.100"/>
 <path d="M953,466h4.500v4.500z" fill="#f4f4f4"/>
 <!-- layers scrollbar -->
 <rect x="958" y="361" width="11" height="120" fill="#4e4e4e"/>
 <rect x="958.500" y="439" width="10" height="27" rx="2" fill="#6a6a6a"/>
 <path d="M960.500,370.500l3,-3l3,3" stroke="#9a9a9a" stroke-width="1.300"/><path d="M960.500,474.500l3,3l3,-3" stroke="#9a9a9a" stroke-width="1.300"/>
</svg>
<div class="abs lt" style="left:838px;top:360px;color:#cfcfcf;height:11px;overflow:hidden"><span style="position:relative;top:-5px">&lt; 编组 &gt;</span></div>
<div class="abs lt" style="left:838px;top:375px">&lt; 路径 &gt;</div>
<div class="abs lt" style="left:838px;top:390.300px">&lt; 编组 &gt;</div>
<div class="abs lt" style="left:838px;top:405.500px">&lt; 编组 &gt;</div>
<div class="abs lt" style="left:838px;top:420.700px">&lt; 编组 &gt;</div>
<div class="abs lt" style="left:838px;top:436px">&lt; 剪切组 &gt;</div>
<div class="abs lt mono" style="left:820px;top:452px">Water</div>
<div class="abs lt mono" style="left:820px;top:468px">Background</div>
<div class="abs lt" style="left:733px;top:484px;color:#d6d6d6"><span class="mono" style="color:#d6d6d6">1</span>&nbsp; 个图层</div>
<!-- watermark -->
<svg class="abs" style="left:760px;top:440px" width="240" height="82" viewBox="760 440 240 82">
 <g fill="#e3e6eb" opacity=".9"><ellipse cx="848" cy="464" rx="5.800" ry="8.500"/><ellipse cx="863.500" cy="465" rx="6" ry="8.500"/><ellipse cx="835" cy="477.500" rx="6" ry="8"/><ellipse cx="873.500" cy="480.500" rx="5.500" ry="7.500"/><ellipse cx="854.500" cy="489" rx="11" ry="9"/></g>
 <text x="767" y="509" font-family="'Liberation Sans',sans-serif" font-weight="bold" font-size="40" fill="#e2e2e2" opacity=".95">Bai</text>
 <text x="885" y="510" font-family="'Noto Sans CJK SC','Liberation Sans',sans-serif" font-weight="900" font-size="32" fill="#e2e2e2" opacity=".9">经验</text>
 <path d="M769.500,522V502Q769.500,492 780,492L870,489Q910,486.500 950,487Q965,488 965,500V508Q965,518 959,522Z" fill="#5e5d5c"/>
 <defs><radialGradient id="gb" cx=".35" cy=".3" r=".8"><stop offset="0" stop-color="#58d878"/><stop offset="1" stop-color="#1c9a3c"/></radialGradient></defs>
 <circle cx="1002" cy="513" r="16.500" fill="url(#gb)" stroke="#a8e6b8" stroke-width="1.400"/>
 <text x="988.500" y="517" font-family="'Liberation Sans',sans-serif" font-weight="bold" font-size="10.500" fill="#fff">50</text>
</svg>

<!-- dropdown -->
<div id="menu" class="abs">
 <div class="r" style="top:2px"><span class="l">新建(N)...</span><span class="s">Ctrl+N</span></div>
 <div class="r" style="top:18px"><span class="l">从模板新建(T)...</span><span class="s">Shift+Ctrl+N</span></div>
 <div class="r" style="top:34px"><span class="l">打开(O)...</span><span class="s">Ctrl+O</span></div>
 <div class="r" style="top:50px"><span class="l">最近打开的文件(F)</span><svg class="a" width="5" height="8" viewBox="0 0 5 8"><path d="M1,1l3,3l-3,3" fill="none" stroke="#666" stroke-width="1.100"/></svg></div>
 <div class="r dis" style="top:66px"><span class="l">在 Bridge 中浏览...</span><span class="s">Alt+Ctrl+O</span></div>
 <div class="sep" style="top:84px"></div>
 <div class="r" style="top:87.500px"><span class="l">关闭(C)</span><span class="s">Ctrl+W</span></div>
 <div class="r hl" style="top:103.500px"><span class="l">存储(S)</span><span class="s">Ctrl+S</span></div>
 <div class="r" style="top:119.500px"><span class="l">存储为(A)...</span><span class="s">Shift+Ctrl+S</span></div>
 <div class="r" style="top:135.500px"><span class="l">存储副本(Y)...</span><span class="s">Alt+Ctrl+S</span></div>
 <div class="r" style="top:151.500px"><span class="l">存储为模板...</span></div>
 <div class="r" style="top:167.500px"><span class="l">存储选中的切片...</span></div>
 <div class="r" style="top:183.500px"><span class="l">恢复(V)</span><span class="s">F12</span></div>
 <div class="sep" style="top:202px"></div>
 <div class="r" style="top:205px"><span class="l" style="letter-spacing:.25px">搜索 Adobe Stock...</span></div>
 <div class="r" style="top:221px"><span class="l">置入(L)...</span><span class="s">Shift+Ctrl+P</span></div>
 <div class="sep" style="top:240px"></div>
 <div class="r" style="top:242px"><span class="l">导出(E)</span><svg class="a" width="5" height="8" viewBox="0 0 5 8"><path d="M1,1l3,3l-3,3" fill="none" stroke="#666" stroke-width="1.100"/></svg></div>
 <div class="r" style="top:258px"><span class="l">导出所选项目...</span></div>
 <div class="sep" style="top:277px"></div>
 <div class="r" style="top:279px"><span class="l">打包(G)...</span><span class="s">Alt+Shift+Ctrl+P</span></div>
 <div class="r" style="top:295px"><span class="l">脚本(R)</span><svg class="a" width="5" height="8" viewBox="0 0 5 8"><path d="M1,1l3,3l-3,3" fill="none" stroke="#666" stroke-width="1.100"/></svg></div>
 <div class="sep" style="top:314px"></div>
 <div class="r" style="top:317px"><span class="l">文档设置(D)...</span><span class="s">Alt+Ctrl+P</span></div>
 <div class="r" style="top:333px"><span class="l">文档颜色模式(M)</span><svg class="a" width="5" height="8" viewBox="0 0 5 8"><path d="M1,1l3,3l-3,3" fill="none" stroke="#666" stroke-width="1.100"/></svg></div>
 <div class="r" style="top:349px"><span class="l">文件信息(I)...</span><span class="s">Alt+Shift+Ctrl+I</span></div>
 <div class="sep" style="top:368px"></div>
 <div class="r" style="top:370px"><span class="l">打印(P)...</span><span class="s">Ctrl+P</span></div>
 <div class="sep" style="top:389px"></div>
 <div class="r" style="top:392px"><span class="l">退出(X)</span><span class="s">Ctrl+Q</span></div>
</div>
</body>
</html>
